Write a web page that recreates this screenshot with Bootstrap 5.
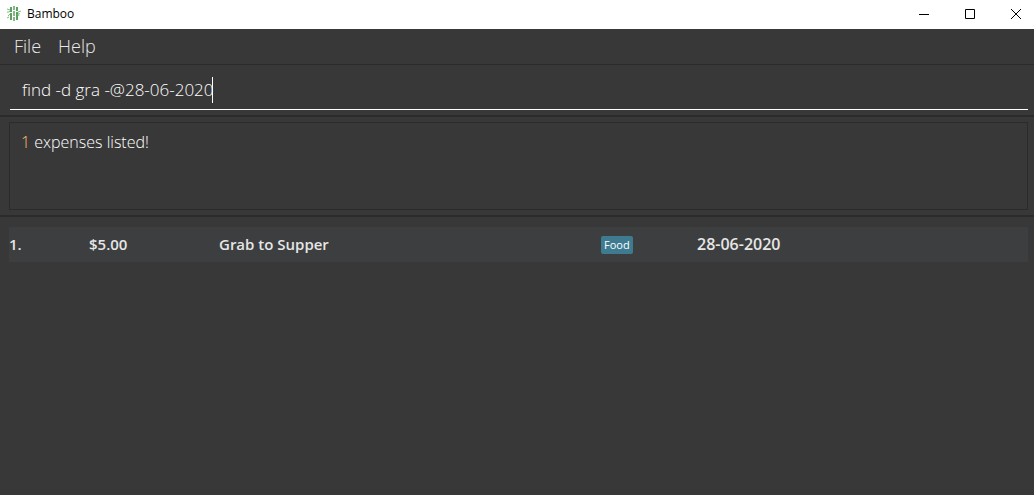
<!DOCTYPE html>
<html lang="en">
<head>
<meta charset="utf-8">
<meta name="viewport" content="width=device-width, initial-scale=1">
<title>Bamboo</title>
<link href="https://cdn.jsdelivr.net/npm/bootstrap@5.3.0/dist/css/bootstrap.min.css" rel="stylesheet">
<style>
  body { background: #383838; color: #fff; font-family: "Open Sans", "Noto Sans", sans-serif; font-size: 16px; line-height: 20px; font-weight: 300; }
  .title-bar { height: 29px; background: #fff; color: #000; font-size: 12px; font-weight: 400; line-height: 16px; padding: 0 0 2px 6px; }
  .app-icon { width: 16px; height: 16px; margin-right: 5px; }
  .win-btn { width: 36px; height: 26px; }
  .win-controls { gap: 10px; }
  .menu-bar { height: 36px; padding: 0 0 1px 14px; gap: 17px; border-bottom: 1px solid #2b2b2b; }
  .menu-item { color: #e8e8e8; font-size: 18px; line-height: 24px; font-weight: 300; }
  .command-pane { padding: 5px 6px 5px 10px; border-bottom: 2px solid #2b2b2b; }
  .command-line { height: 40px; border-bottom: 1px solid #fff; }
  .command-box { height: 39px; padding: 0 12px; color: #fff; font-size: 17px; font-weight: 300; }
  .caret { left: 202px; top: 7px; width: 1px; height: 26px; background: #fff; }
  .result-pane { padding: 5px 6px 5px 9px; border-bottom: 2px solid #2b2b2b; }
  .result-box { height: 88px; border: 1px solid #2b2b2b; padding: 9px 11px; }
  .result-count { color: #ffc070; }
  .list-pane { padding: 10px 6px 10px 9px; }
  .expenses { table-layout: fixed; background: #3c3e3f; color: #e6e6e6; font-size: 15px; font-weight: 600; line-height: 20px; }
  .expenses td { height: 35px; padding: 0 0 2px; vertical-align: middle; }
  .expenses .expense-date { font-size: 16px; }
  .col-index { width: 80px; }
  .col-amount { width: 130px; }
  .col-tag { width: 96px; }
  .col-date { width: 331px; }
  .tag { background: #3e7b91; color: #fff; border-radius: 2px; font-size: 11px; font-weight: 400; line-height: 18px; padding: 0 3px; }
</style>
<script src="https://cdn.jsdelivr.net/npm/bootstrap@5.3.0/dist/js/bootstrap.bundle.min.js"></script>
</head>
<body>
<div class="d-flex flex-column min-vh-100">
  <header class="title-bar d-flex align-items-center">
    <svg class="app-icon" viewBox="0 0 16 16" fill="none" stroke="#5aa45f" aria-hidden="true">
      <path stroke-width="2" d="M5 1v5M5 7v7M11 1v4M11 6v8"/>
      <path stroke-width="1.500" d="M8 0v4M8 5v5M8 11v4"/>
      <path stroke-width="1" stroke="#7dbb80" d="M1 3l3 1M1 6h2l1-1M2 10l2-2M1 12l2-1M12 6l3-1M12 7l2 1M12 8l1 2"/>
    </svg>
    <span class="flex-grow-1">Bamboo</span>
    <div class="win-controls d-flex">
      <button type="button" class="win-btn btn p-0 border-0 rounded-0 d-flex align-items-center justify-content-center" aria-label="Minimize">
        <svg width="10" height="10" viewBox="0 0 10 10" shape-rendering="crispEdges"><path d="M0 5h10v1H0z"/></svg>
      </button>
      <button type="button" class="win-btn btn p-0 border-0 rounded-0 d-flex align-items-center justify-content-center" aria-label="Maximize">
        <svg width="10" height="10" viewBox="0 0 10 10" fill="none" stroke="#000"><path d="M.5.5h9v9h-9z"/></svg>
      </button>
      <button type="button" class="win-btn btn p-0 border-0 rounded-0 d-flex align-items-center justify-content-center" aria-label="Close">
        <svg width="10" height="10" viewBox="0 0 10 10" fill="none" stroke="#000"><path d="M0 0l10 10M10 0L0 10"/></svg>
      </button>
    </div>
  </header>

  <nav class="menu-bar d-flex align-items-center">
    <button type="button" class="menu-item btn p-0 border-0">File</button>
    <button type="button" class="menu-item btn p-0 border-0">Help</button>
  </nav>

  <section class="command-pane">
    <div class="command-line position-relative">
      <input type="text" class="command-box w-100 bg-transparent border-0" aria-label="Command" value="find -d gra -@28-06-2020">
      <span class="caret position-absolute"></span>
    </div>
  </section>

  <section class="result-pane">
    <div class="result-box"><span class="result-count">1</span> expenses listed!</div>
  </section>

  <main class="list-pane flex-grow-1">
    <table class="expenses w-100">
      <colgroup><col class="col-index"><col class="col-amount"><col><col class="col-tag"><col class="col-date"></colgroup>
      <tbody>
        <tr>
          <td>1.</td>
          <td>$5.00</td>
          <td>Grab to Supper</td>
          <td><span class="tag d-inline-block">Food</span></td>
          <td class="expense-date">28-06-2020</td>
        </tr>
      </tbody>
    </table>
  </main>
</div>
</body>
</html>
